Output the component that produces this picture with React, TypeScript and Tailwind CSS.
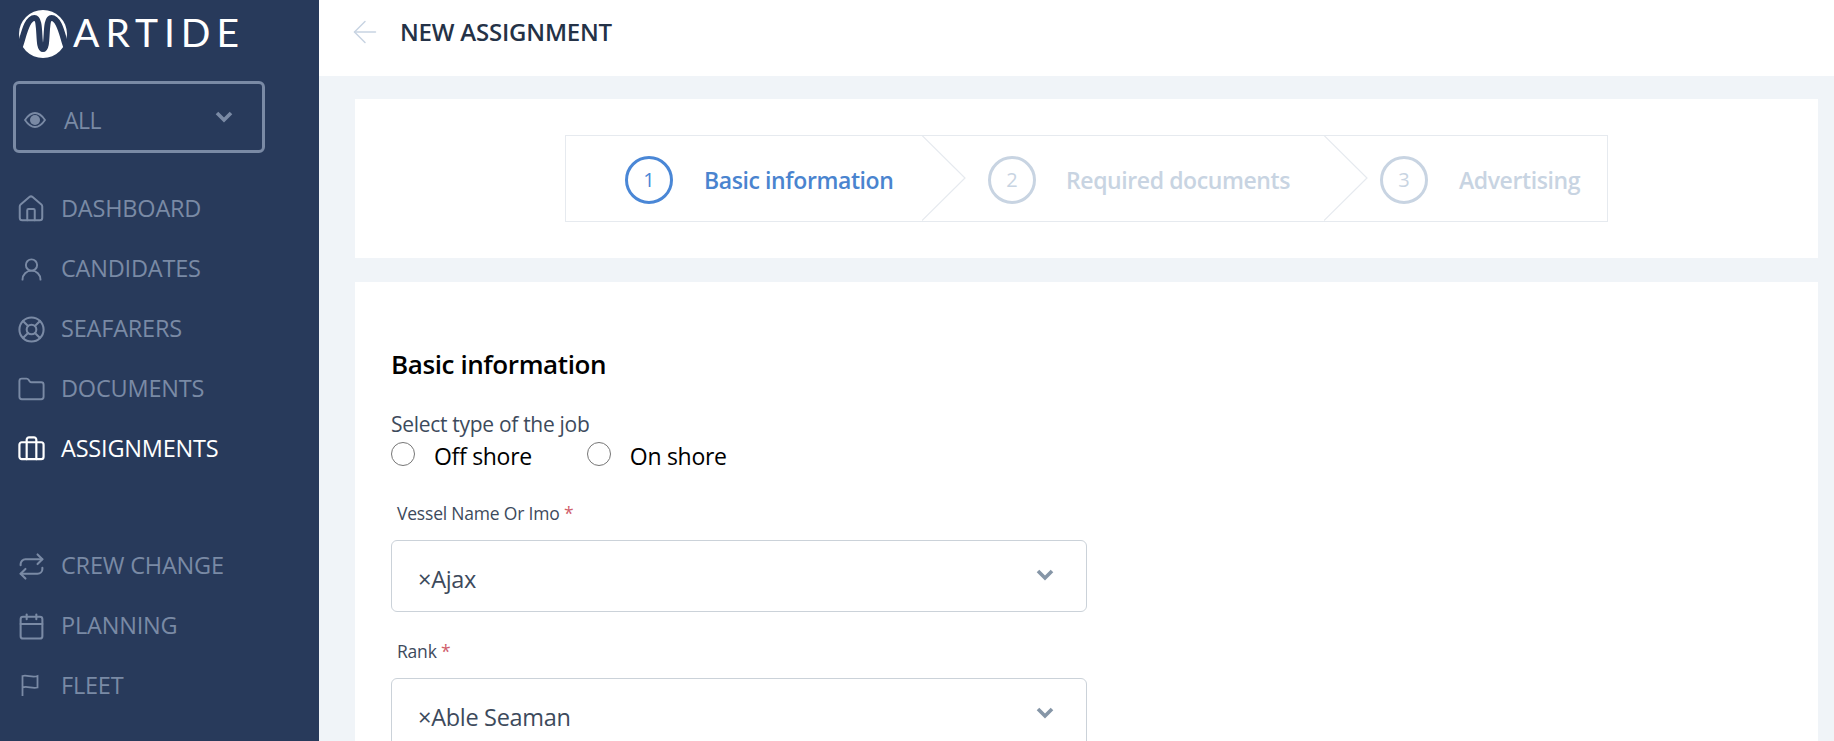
import React from "react";
import {
  ArrowLeft,
  Briefcase,
  Calendar,
  Folder,
  House,
  LifeBuoy,
  Repeat,
  UserRound,
} from "lucide-react";

const font = "font-['Open_Sans',sans-serif]";

const FlagIcon = () => (
  <svg width="24" height="24" viewBox="0 0 24 24" fill="none" stroke="currentColor" strokeWidth="1.8">
    <path d="M3.5 22V2C8 0.5 13 4 18.5 2V13.5C13 15 8 11.5 3.5 13.5" />
  </svg>
);

const ChevronIcon = ({ className }: { className: string }) => (
  <svg width="18" height="12" viewBox="0 0 18 12" fill="none" stroke="currentColor" strokeWidth="3.6" className={className}>
    <path d="M2 2L9 9L16 2" />
  </svg>
);

const EyeIcon = () => (
  <svg width="22" height="16" viewBox="0 0 22 16" fill="none" stroke="currentColor" strokeWidth="1.8">
    <path d="M1 8C4 3.5 7.5 1 11 1s7 2.5 10 7c-3 4.5-6.5 7-10 7S4 12.500 1 8Z" />
    <circle cx="11" cy="8" r="5" fill="currentColor" stroke="none" />
  </svg>
);

const Logo = () => (
  <div className="flex items-center">
    <svg width="50" height="50" viewBox="0 0 50 50">
      <circle cx="25" cy="25" r="24" fill="#fff" />
      <path
        d="M2 37C5 30 8 9 16.500 9C24 9 19 40 25 40C31 40 26 9 33.500 9C42 9 45 30 48 37"
        fill="none"
        stroke="#283a5b"
        strokeWidth="6"
      />
    </svg>
    <span className="mb-[4px] ml-[5px] text-[39px] leading-none font-normal tracking-[6px] text-white font-['Lato',sans-serif]">
      ARTIDE
    </span>
  </div>
);

const mainNav = [
  { label: "DASHBOARD", icon: <House size={30} strokeWidth={1.6} /> },
  { label: "CANDIDATES", icon: <UserRound size={27} strokeWidth={1.7} /> },
  { label: "SEAFARERS", icon: <LifeBuoy size={29} strokeWidth={1.7} /> },
  { label: "DOCUMENTS", icon: <Folder size={29} strokeWidth={1.6} /> },
  { label: "ASSIGNMENTS", icon: <Briefcase size={29} strokeWidth={1.8} />, active: true },
];

const otherNav = [
  { label: "CREW CHANGE", icon: <Repeat size={29} strokeWidth={1.7} /> },
  { label: "PLANNING", icon: <Calendar size={29} strokeWidth={1.7} /> },
  { label: "FLEET", icon: <FlagIcon /> },
];

const NavItem = ({ label, icon, active }: { label: string; icon: React.ReactNode; active?: boolean }) => (
  <div className={`flex h-[60px] items-center gap-[15px] pl-[16px] ${active ? "text-white" : "text-[#7a8aa5]"}`}>
    <span className="flex w-[30px] justify-center">{icon}</span>
    <span className="text-[23.500px] tracking-[-0.2px]">{label}</span>
  </div>
);

const Sidebar = () => (
  <aside className="flex h-full w-[319px] shrink-0 flex-col bg-[#283a5b]">
    <div className="pl-[18px] pt-[9px]">
      <Logo />
    </div>
    <div className="mx-[13px] mt-[22px] flex h-[72px] w-[252px] items-center rounded-md border-[3px] border-[#7a8aa5] pl-[8px] pr-[29px] text-[#7a8aa5]">
      <span className="mt-[5px]">
        <EyeIcon />
      </span>
      <span className="ml-[18px] mt-[6px] text-[23px] tracking-[-0.5px]">ALL</span>
      <ChevronIcon className="mb-0 ml-auto" />
    </div>
    <nav className="mt-[26px]">
      {mainNav.map((item) => (
        <NavItem key={item.label} {...item} />
      ))}
    </nav>
    <nav className="mt-[57px]">
      {otherNav.map((item) => (
        <NavItem key={item.label} {...item} />
      ))}
    </nav>
  </aside>
);

const Chevron = () => (
  <svg className="absolute -top-px right-[-45px] z-10" width="45" height="86" viewBox="0 0 45 86" fill="none">
    <path d="M0 0.5 L43 43 L0 85.5" stroke="#e6eaef" strokeWidth="1.2" />
  </svg>
);

const Step = ({
  n,
  label,
  active,
  last,
  className,
}: {
  n: number;
  label: string;
  active?: boolean;
  last?: boolean;
  className: string;
}) => (
  <div className={`relative flex h-full items-center ${className}`}>
    <div
      className={`mt-[2px] flex h-[48px] w-[48px] items-center justify-center rounded-full border-[3px] text-[20px] ${
        active ? "border-[#4a87d6] text-[#4a87d6]" : "border-[#c8d4e2] text-[#c8d4e2]"
      }`}
    >
      {n}
    </div>
    <span
      className={`mt-[4px] text-[23px] font-semibold tracking-[-0.4px] ${active ? "text-[#4a84cf]" : "text-[#c8d4e2]"}`}
    >
      {label}
    </span>
    {!last && <Chevron />}
  </div>
);

const Stepper = () => (
  <div className="flex h-[159px] items-center justify-center bg-white">
    <div className="flex h-[87px] w-[1043px] border border-[#e6eaef]">
      <Step n={1} label="Basic information" active className="w-[356px] gap-[31px] pl-[59px]" />
      <Step n={2} label="Required documents" className="w-[402px] gap-[30px] pl-[66px]" />
      <Step n={3} label="Advertising" last className="flex-1 gap-[31px] pl-[56px]" />
    </div>
  </div>
);

const Radio = ({ label }: { label: string }) => (
  <label className="flex items-center">
    <span className="mb-[4px] h-[24px] w-[24px] rounded-full border border-[#767676] bg-white" />
    <span className="ml-[19px] text-[23px] leading-[32px] tracking-[-0.3px] text-black">{label}</span>
  </label>
);

const SelectField = ({ label, value }: { label: string; value: string }) => (
  <div>
    <div className="ml-[6px] text-[17.500px] leading-[24px] tracking-[-0.2px] text-[#3d4a5c]">
      {label} <span className="text-[#d0606c]">*</span>
    </div>
    <div className="mt-[15px] flex h-[72px] w-[696px] items-center rounded-md border border-[#cbd2d9] pl-[26px] pr-[32px]">
      <span className="mt-[7px] text-[23.500px] tracking-[-0.3px] text-[#3d4a5c]">×{value}</span>
      <ChevronIcon className="mb-[2px] ml-auto text-[#8696a7]" />
    </div>
  </div>
);

export default function App() {
  return (
    <div className={`flex h-screen overflow-hidden bg-[#f0f4f8] ${font}`}>
      <Sidebar />
      <main className="min-w-0 flex-1">
        <header className="flex h-[76px] items-center bg-white pb-[12px] pl-[28px]">
          <ArrowLeft size={36} strokeWidth={1} className="text-[#c8d4e2]" />
          <h1 className="ml-[17px] text-[24px] font-semibold tracking-[-0.2px] text-[#243247]">NEW ASSIGNMENT</h1>
        </header>
        <div className="pl-[36px] pr-[16px] pt-[23px]">
          <Stepper />
          <section className="mt-[24px] bg-white pl-[36px] pt-[64px] pb-[40px]">
            <h2 className="text-[26px] leading-[36px] font-semibold tracking-[-0.4px] text-black">Basic information</h2>
            <div className="mt-[29px] text-[21px] leading-[26px] tracking-[-0.3px] text-[#3d4a5c]">
              Select type of the job
            </div>
            <div className="mt-[3px] flex gap-[55px]">
              <Radio label="Off shore" />
              <Radio label="On shore" />
            </div>
            <div className="mt-[29px] flex flex-col gap-[27px]">
              <SelectField label="Vessel Name Or Imo" value="Ajax" />
              <SelectField label="Rank" value="Able Seaman" />
            </div>
          </section>
        </div>
      </main>
    </div>
  );
}
